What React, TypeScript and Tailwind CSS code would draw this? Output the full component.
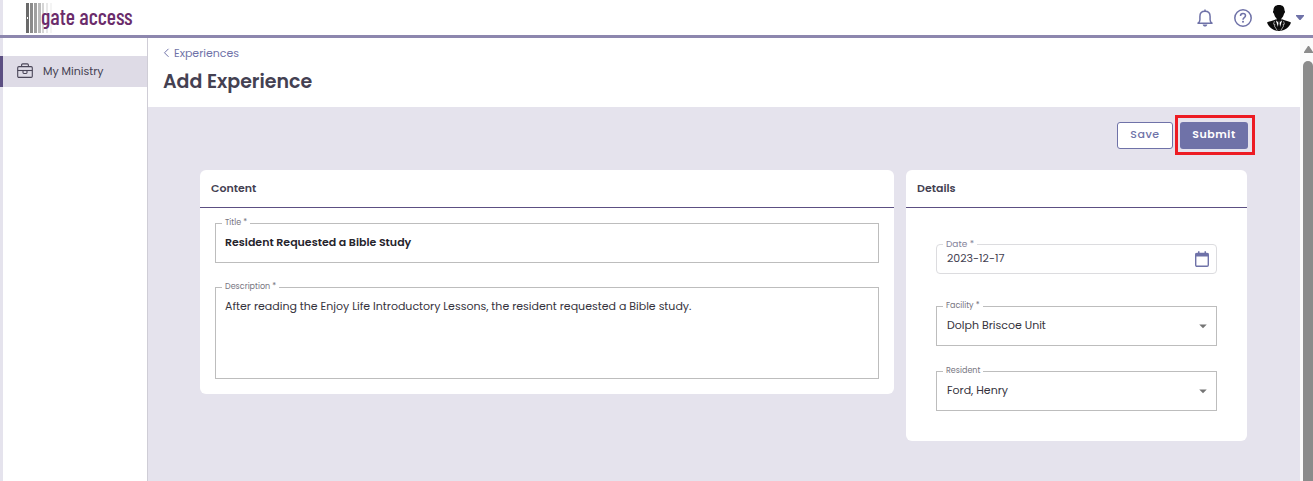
import React from 'react';
import { MdArrowDropDown } from 'react-icons/md';

const BriefcaseIcon = () => (
  <svg className="h-4 w-4" viewBox="0 0 16 16" fill="none" stroke="#4a4658" strokeWidth="1.1" aria-hidden="true">
    <rect x="0.7" y="3.600" width="14.600" height="10.800" rx="1.200" />
    <path d="M4.600 3.600V2c0-.7.4-1.100 1.100-1.100h4.600c.7 0 1.100.4 1.100 1.100v1.600" />
    <path d="M.7 7.500h14.600" />
    <path d="M6 7.500v2.100c0 .6.3.9.9.9h2.200c.6 0 .9-.3.9-.9V7.500" />
  </svg>
);

const BellIcon = () => (
  <svg className="h-[18px] w-4" viewBox="0 0 16 18" fill="none" stroke="#6f72a8" strokeWidth="1.5" aria-hidden="true">
    <path d="M8 .4v1.800" />
    <path d="M1 14.200h14c-1.300-.8-1.900-1.900-1.900-3.500V7.400c0-3.100-2.100-5.200-5.100-5.200S2.900 4.300 2.900 7.400v3.300c0 1.600-.6 2.700-1.900 3.500z" strokeLinejoin="round" />
    <path d="M5.600 15.500h4.800c-.3 1.300-1.200 2.100-2.400 2.100s-2.100-.8-2.400-2.100z" fill="#6f72a8" stroke="none" />
  </svg>
);

const HelpIcon = () => (
  <svg className="h-[18px] w-[18px]" viewBox="0 0 18 18" fill="none" stroke="#6f72a8" strokeWidth="1.5" aria-hidden="true">
    <circle cx="9" cy="9" r="8.200" />
    <path d="M6.500 7.100c0-1.500 1-2.500 2.500-2.500s2.500.9 2.500 2.200c0 1.900-2.500 1.900-2.500 3.900" />
    <circle cx="9" cy="12.800" r="1" fill="#6f72a8" stroke="none" />
  </svg>
);

const Avatar = () => (
  <svg className="h-[26px] w-6" viewBox="0 0 24 26" aria-hidden="true">
    <path d="M12 0c3.800 0 5.600 2.200 5.500 5.400.8.3.6 2.600-.4 3-.5 2.300-1.500 4-2.600 4.800v3L12 18l-2.500-1.800v-3c-1.100-.8-2.100-2.500-2.600-4.800-1-.4-1.200-2.700-.4-3C6.400 2.200 8.200 0 12 0z" fill="#0b0b0b" />
    <path d="M9 14.200C5.500 16 1.800 16 0 17.600c1.500 4.600 6.300 8.400 12 8.400s10.500-3.800 12-8.400c-1.800-1.600-5.500-1.600-9-3.400l-3 2.800z" fill="#0b0b0b" />
    <path d="M8.800 15.200l3.200 10 3.200-10-1.700 1.600h-3z" fill="#fff" />
    <path d="M11 16.600h2l-.4 1.600.7 5L12 25.600l-1.300-2.400.7-5z" fill="#0b0b0b" />
    <path d="M7.400 16.200l-.8 3 1.400.4-.6 1.400 2.800 4.400M16.600 16.200l.8 3-1.400.4.6 1.400-2.800 4.400" fill="none" stroke="#fff" strokeWidth="0.600" />
  </svg>
);

const CalendarIcon = () => (
  <svg className="h-4 w-[14px]" viewBox="0 0 14 16" aria-hidden="true">
    <rect x="0.7" y="2.500" width="12.600" height="12.800" rx="1.200" fill="#fff" stroke="#6f72a8" strokeWidth="1.400" />
    <path d="M.6 2.300h12.800v3.300H.6zM3 .3h1.500v2.500H3zM9.500.3H11v2.500H9.500z" fill="#6f72a8" />
  </svg>
);

const Logo = () => (
  <a href="#" className="flex h-[30px] items-start">
    <svg className="h-[30px] w-[27px]" viewBox="0 0 27 30" aria-hidden="true">
      <rect x="0" width="3" height="30" fill="#6a6a6a" />
      <rect x="4" width="3" height="30" fill="#8b8b8b" />
      <rect x="8" width="3" height="30" fill="#a0a0a0" />
      <rect x="12" width="3" height="30" fill="#bcbcbc" />
      <rect x="16" width="2" height="30" fill="#d5d5d5" />
      <rect x="20" width="2" height="30" fill="#e8e8e8" />
      <rect x="24" width="2" height="30" fill="#f4f4f4" />
      <rect x="1" y="14" width="1" height="2" fill="#fff" />
    </svg>
    <span className="-ml-3 font-['Barlow_Condensed','Roboto_Condensed','Rajdhani','Liberation_Sans',sans-serif] text-[22px] leading-[26px] font-medium whitespace-nowrap text-[#6b2c6b]">
      gate access
    </span>
  </a>
);

type FieldProps = {
  id: string;
  label: string;
  soft?: boolean;
  children: React.ReactNode;
};

const Field = ({ id, label, soft, children }: FieldProps) => (
  <fieldset className={soft ? 'min-w-0 rounded-sm border border-[#dcdcdf]' : 'min-w-0 border border-[#bdbdbd]'}>
    <legend className={soft ? 'ml-1.5 px-[3px] text-[9px] leading-3 text-[#85839a]' : 'ml-1.5 px-[3px] text-[8px] leading-3 text-[#77757f]'}>
      <label htmlFor={id} className="block">{label}</label>
    </legend>
    {children}
  </fieldset>
);

const SelectField = ({ id, label, value }: { id: string; label: string; value: string }) => (
  <Field id={id} label={label}>
    <div className="relative h-[33px]">
      <select id={id} defaultValue={value} className="h-[26px] w-full appearance-none bg-transparent pr-8 pl-2.5 outline-none">
        <option>{value}</option>
      </select>
      <MdArrowDropDown className="pointer-events-none absolute top-[5px] right-1 h-[18px] w-[18px] text-[#757575]" />
    </div>
  </Field>
);

const Card = ({ title, className, children }: { title: string; className: string; children: React.ReactNode }) => (
  <section className={`rounded-md bg-white ${className}`}>
    <h2 className="border-b border-[#5c4f82] px-[11px] pt-2.5 pb-[11px] text-[11px] leading-4 font-semibold text-[#444152]">
      {title}
    </h2>
    {children}
  </section>
);

const App = () => {
  return (
    <div className="flex min-h-screen flex-col bg-white font-['Poppins','Inter',sans-serif] text-[11px] leading-4 text-[#35333d]">
      <header className="border-b-[3px] border-[#8d87ae]">
        <div className="flex h-[35px] items-center justify-between border-l-[3px] border-[#e5e3ed] pr-[9px] pl-[23px]">
          <Logo />
          <div className="flex items-center">
            <button type="button" aria-label="Notifications" className="mr-[21px]">
              <BellIcon />
            </button>
            <button type="button" aria-label="Help" className="mr-[15px]">
              <HelpIcon />
            </button>
            <button type="button" aria-label="Account" className="flex items-center gap-[5px]">
              <Avatar />
              <svg className="h-[5px] w-2" viewBox="0 0 8 5" aria-hidden="true">
                <path d="M0 0h8v1L4.500 5h-1L0 1z" fill="#6f72a8" />
              </svg>
            </button>
          </div>
        </div>
      </header>

      <div className="flex flex-1">
        <aside className="flex w-[148px] shrink-0 flex-col border-r border-[#cfcdd6]">
          <div className="h-[18px] border-l-[3px] border-[#e5e3ed]" />
          <nav>
            <a href="#" className="flex h-[31px] items-center gap-2.5 border-l-[3px] border-[#5c4f82] bg-[#dedbe6] pb-px pl-[14px] text-[#444152]">
              <BriefcaseIcon />
              My Ministry
            </a>
          </nav>
          <div className="flex-1 border-l-[3px] border-[#e5e3ed]" />
        </aside>

        <main className="flex min-w-0 flex-1 flex-col bg-[#e5e3ed]">
          <div className="bg-white px-[15px] pt-[7px] pb-[11px]">
            <a href="#" className="flex items-center gap-1 text-[#6f72a8]">
              <svg className="h-2.5 w-[7px]" viewBox="0 0 7 10" fill="none" stroke="#6f72a8" aria-hidden="true">
                <path d="M5.500.8L1.500 4.800l4 4" />
              </svg>
              Experiences
            </a>
            <h1 className="mt-[7px] text-[19px] leading-7 font-semibold text-[#444152]">Add Experience</h1>
          </div>

          <form className="pt-2 pr-[45px] pb-10 pl-[52px]" onSubmit={(e) => e.preventDefault()}>
            <div className="flex items-center justify-end gap-0.5">
              <button type="button" className="h-[27px] w-14 rounded-[3px] border border-[#6f72a8] bg-white pb-0.5 font-medium tracking-wider text-[#6f72a8]">
                Save
              </button>
              <div className="border-[3px] border-[#ed1c24] pt-1 pr-1 pb-[3px] pl-0.5">
                <button type="submit" className="block h-[27px] w-[68px] rounded-[3px] bg-[#6f72a8] pb-[3px] font-semibold tracking-wider text-white">
                  Submit
                </button>
              </div>
            </div>

            <div className="mt-[15px] mr-2 flex items-start gap-3">
              <Card title="Content" className="min-w-0 flex-1">
                <div className="flex flex-col gap-[18px] px-[15px] pt-[9px] pb-[15px]">
                  <Field id="title" label="Title *">
                    <input
                      id="title"
                      type="text"
                      defaultValue="Resident Requested a Bible Study"
                      className="mb-1.5 block h-[27px] w-full px-[9px] font-semibold text-[#26242c] outline-none"
                    />
                  </Field>
                  <Field id="description" label="Description *">
                    <textarea
                      id="description"
                      defaultValue="After reading the Enjoy Life Introductory Lessons, the resident requested a Bible study."
                      className="block h-[85px] w-full resize-none px-[9px] pt-[5px] outline-none"
                    />
                  </Field>
                </div>
              </Card>

              <Card title="Details" className="w-[341px] shrink-0">
                <div className="px-[30px] pt-[30px] pb-[30px]">
                  <Field id="date" label="Date *" soft>
                    <div className="flex h-[23px] items-start justify-between pr-[7px] pl-2.5">
                      <input id="date" type="text" defaultValue="2023-12-17" className="h-4 min-w-0 flex-1 text-[#444152] outline-none" />
                      <button type="button" aria-label="Choose date" className="pt-px">
                        <CalendarIcon />
                      </button>
                    </div>
                  </Field>
                  <div className="mt-[26px] flex flex-col gap-[19px]">
                    <SelectField id="facility" label="Facility *" value="Dolph Briscoe Unit" />
                    <SelectField id="resident" label="Resident" value="Ford, Henry" />
                  </div>
                </div>
              </Card>
            </div>
          </form>
        </main>

        <div className="flex w-[13px] shrink-0 flex-col items-end bg-[#fbfbfb] pt-2" aria-hidden="true">
          <svg className="h-[7px] w-[9px]" viewBox="0 0 9 7">
            <path d="M4 0h1l4 6v1H0V6z" fill="#8b8b8b" />
          </svg>
          <div className="mt-2 w-2.5 flex-1 rounded-t-full bg-[#8b8b8b]" />
        </div>
      </div>
    </div>
  );
};

export default App;
